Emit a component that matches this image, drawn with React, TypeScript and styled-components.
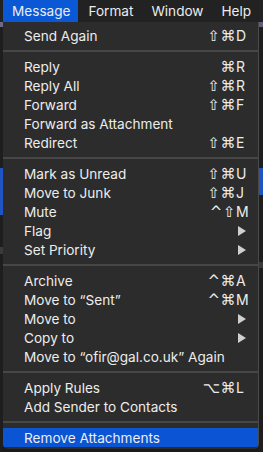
import React from "react";
import styled, { createGlobalStyle } from "styled-components";

const Global = createGlobalStyle`
  html, body { margin: 0; padding: 0; background: #1b1b1b; }
  body { width: 263px; height: 452px; overflow: hidden;
    font-family: Inter, "Liberation Sans", "DejaVu Sans", Arial, sans-serif; }
`;

const Screen = styled.div`
  width: 263px;
  height: 452px;
  display: flex;
  flex-direction: column;
  background: #1b1b1b;
`;

const MenuBar = styled.div`
  height: 22px;
  display: flex;
  align-items: stretch;
  padding-left: 3px;
  background: #222222;
`;

const BarItem = styled.div<{ $active?: boolean }>`
  display: flex;
  align-items: center;
  padding: 0 8px 1px 9px;
  margin-right: 1px;
  font-size: 13.6px;
  color: #ececec;
  background: ${(p) => (p.$active ? "#0b58d6" : "transparent")};
`;

const Body = styled.div`
  flex: 1;
  display: grid;
  grid-template-columns: 3px 256px 4px;
  align-items: start;
`;

const SideStrip = styled.div<{ $side: "left" | "right" }>`
  height: 430px;
  background: ${(p) =>
    p.$side === "left"
      ? `linear-gradient(to bottom, #6e6a86 0 5px, #1e1e1e 5px 146px, #1e55c2 146px 193px, #1e1e1e 193px 225px, #3a3a3a 225px 232px, #1e1e1e 232px)`
      : `linear-gradient(to bottom, #5e5d7a 0 5px, #1e1e1e 5px 146px, #1e55c2 146px 173px, #1e1e1e 173px 240px, #3a3a3a 240px 246px, #1e1e1e 246px)`};
`;

const Menu = styled.div`
  background: #2c2c2c;
  padding: 4px 0 2px 0;
  border-right: 1px solid #4a4a4a;
  border-radius: 0 0 5px 5px;
  overflow: hidden;
  display: flex;
  flex-direction: column;
`;

const Row = styled.div<{ $active?: boolean }>`
  height: 19px;
  display: flex;
  align-items: center;
  padding: 0 8px 0 21px;
  font-size: 13.6px;
  color: #ededed;
  background: ${(p) => (p.$active ? "#0b55d4" : "transparent")};
`;

const Label = styled.span`
  flex: 1;
  white-space: nowrap;
`;

const Shortcut = styled.span`
  display: flex;
  align-items: center;
`;

const Mods = styled.span`
  font-family: "DejaVu Sans", sans-serif;
  font-size: 15px;
  letter-spacing: 0.5px;
`;

const Key = styled.span`
  width: 14px;
  text-align: left;
  font-size: 14px;
`;

const Separator = styled.div`
  height: 2px;
  margin: 5px 0;
  background: #474747;
`;

const Arrow = styled.svg`
  width: 8px;
  height: 10px;
  margin-right: 4px;
`;

type Item =
  | { sep: true }
  | { label: string; mods?: string; k?: string; sub?: boolean; active?: boolean };

const items: Item[] = [
  { label: "Send Again", mods: "⇧⌘", k: "D" },
  { sep: true },
  { label: "Reply", mods: "⌘", k: "R" },
  { label: "Reply All", mods: "⇧⌘", k: "R" },
  { label: "Forward", mods: "⇧⌘", k: "F" },
  { label: "Forward as Attachment" },
  { label: "Redirect", mods: "⇧⌘", k: "E" },
  { sep: true },
  { label: "Mark as Unread", mods: "⇧⌘", k: "U" },
  { label: "Move to Junk", mods: "⇧⌘", k: "J" },
  { label: "Mute", mods: "^⇧", k: "M" },
  { label: "Flag", sub: true },
  { label: "Set Priority", sub: true },
  { sep: true },
  { label: "Archive", mods: "^⌘", k: "A" },
  { label: "Move to \u201cSent\u201d", mods: "^⌘", k: "M" },
  { label: "Move to", sub: true },
  { label: "Copy to", sub: true },
  { label: "Move to \u201cofir@gal.co.uk\u201d Again" },
  { sep: true },
  { label: "Apply Rules", mods: "⌥⌘", k: "L" },
  { label: "Add Sender to Contacts" },
  { sep: true },
  { label: "Remove Attachments", active: true },
];

export default function App() {
  return (
    <Screen>
      <Global />
      <MenuBar>
        <BarItem $active>Message</BarItem>
        <BarItem>Format</BarItem>
        <BarItem>Window</BarItem>
        <BarItem>Help</BarItem>
      </MenuBar>
      <Body>
        <SideStrip $side="left" />
        <Menu>
          {items.map((it, i) =>
            "sep" in it ? (
              <Separator key={i} />
            ) : (
              <Row key={i} $active={it.active}>
                <Label>{it.label}</Label>
                {it.k && (
                  <Shortcut>
                    <Mods>{it.mods}</Mods>
                    <Key>{it.k}</Key>
                  </Shortcut>
                )}
                {it.sub && (
                  <Arrow viewBox="0 0 8 10">
                    <path d="M0 0 L8 5 L0 10 Z" fill="#d0d0d0" />
                  </Arrow>
                )}
              </Row>
            )
          )}
        </Menu>
        <SideStrip $side="right" />
      </Body>
    </Screen>
  );
}
